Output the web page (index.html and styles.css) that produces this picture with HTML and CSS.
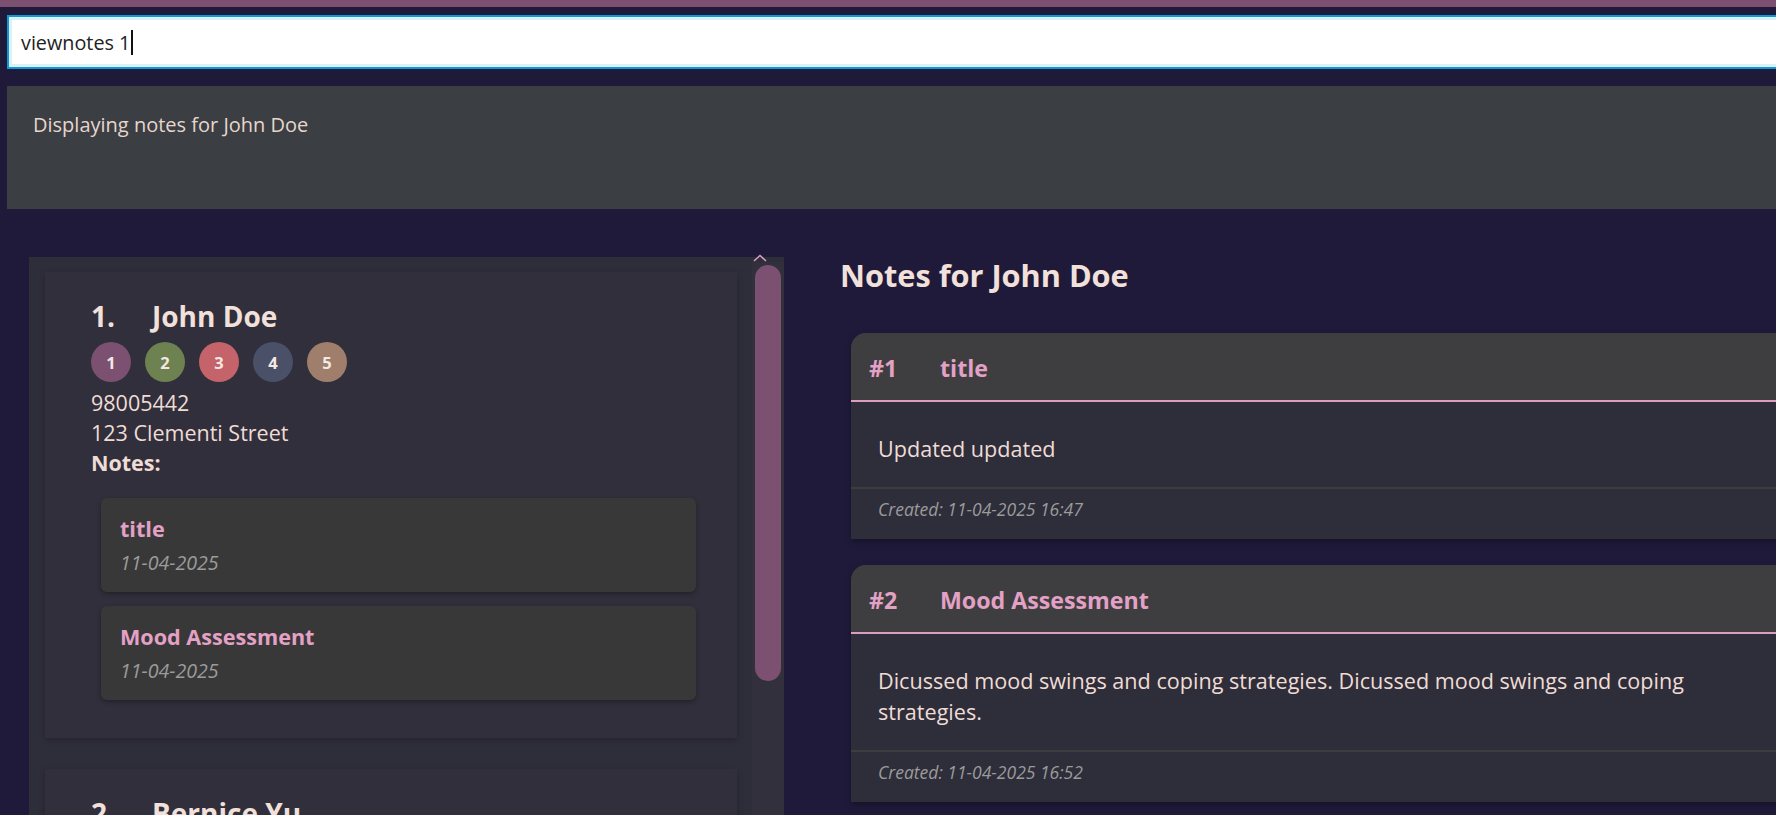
FILE: index.html
```html
<!DOCTYPE html>
<html lang="en">
<head>
<meta charset="utf-8">
<title>Notes</title>
<link rel="stylesheet" href="styles.css">
</head>
<body>
<div class="topbar"></div>
<div class="app">
  <div class="command"><span class="cmd-text">viewnotes 1</span><span class="caret"></span></div>
  <div class="result">Displaying notes for John Doe</div>
  <div class="main">
    <div class="person-panel">
      <div class="person-list">
        <div class="person-card">
          <div class="person-name"><span class="idx">1.</span><span>John Doe</span></div>
          <div class="chips">
            <span class="chip c1">1</span>
            <span class="chip c2">2</span>
            <span class="chip c3">3</span>
            <span class="chip c4">4</span>
            <span class="chip c5">5</span>
          </div>
          <div class="line">98005442</div>
          <div class="line">123 Clementi Street</div>
          <div class="line bold">Notes:</div>
          <div class="mini-notes">
            <div class="mini-note">
              <div class="mini-title">title</div>
              <div class="mini-date">11-04-2025</div>
            </div>
            <div class="mini-note">
              <div class="mini-title">Mood Assessment</div>
              <div class="mini-date">11-04-2025</div>
            </div>
          </div>
        </div>
        <div class="person-card">
          <div class="person-name"><span class="idx">2.</span><span>Bernice Yu</span></div>
        </div>
      </div>
      <div class="scrollbar">
        <svg class="scroll-arrow" width="14" height="8" viewBox="0 0 14 8"><polyline points="1,7 7,1.5 13,7" fill="none" stroke="#d79ac0" stroke-width="1.6"/></svg>
        <div class="thumb"></div>
      </div>
    </div>
    <div class="notes-panel">
      <h1 class="notes-title">Notes for John Doe</h1>
      <div class="note">
        <div class="note-head"><span class="note-num">#1</span><span>title</span></div>
        <div class="note-body">Updated updated</div>
        <div class="note-foot">Created: 11-04-2025 16:47</div>
      </div>
      <div class="note">
        <div class="note-head"><span class="note-num">#2</span><span>Mood Assessment</span></div>
        <div class="note-body">Dicussed mood swings and coping strategies. Dicussed mood swings and coping strategies.</div>
        <div class="note-foot">Created: 11-04-2025 16:52</div>
      </div>
    </div>
  </div>
</div>
</body>
</html>
```
FILE: styles.css
```css
html, body {
  margin: 0;
  padding: 0;
  height: 100%;
  overflow: hidden;
}
body {
  background: #1f1a3a;
  font-family: "Open Sans", "Noto Sans", sans-serif;
  color: #efdcd5;
}
.topbar {
  height: 7px;
  background: #7b5070;
}
.app {
  padding-left: 7px;
  width: 1800px;
}
.command {
  box-sizing: border-box;
  margin-top: 8px;
  height: 54px;
  background: #ffffff;
  border: 2px solid #0b9ad6;
  box-shadow: inset 0 0 0 3px #dcf0f8;
  display: flex;
  align-items: center;
  padding-left: 12px;
  font-size: 19.8px;
  color: #222;
}
.caret {
  display: inline-block;
  width: 1.5px;
  height: 25px;
  background: #111;
  margin-left: 1px;
}
.result {
  box-sizing: border-box;
  margin-top: 17px;
  height: 123px;
  background: #3b3e42;
  padding: 25px 0 0 26px;
  font-size: 20px;
  line-height: 28px;
  color: #e6d6cc;
}
.main {
  display: flex;
  align-items: flex-start;
}
.person-panel {
  margin: 48px 0 0 22px;
  width: 755px;
  height: 560px;
  display: flex;
  background: #2e2d3a;
}
.person-list {
  flex: 1;
  padding: 15px 15px 0 16px;
  display: flex;
  flex-direction: column;
  gap: 31px;
}
.person-card {
  background: #302f3b;
  box-shadow: 0 2px 6px rgba(0, 0, 0, 0.22);
  padding: 25px 41px 38px 46px;
}
.person-name {
  font-weight: 700;
  font-size: 28px;
  line-height: 38px;
  color: #f2e0da;
}
.idx {
  display: inline-block;
  width: 61px;
}
.chips {
  display: flex;
  gap: 14px;
  margin-top: 7px;
}
.chip {
  width: 40px;
  height: 40px;
  border-radius: 50%;
  display: flex;
  align-items: center;
  justify-content: center;
  font-weight: 700;
  font-size: 16.5px;
  color: #f3e8e2;
}
.c1 { background: #7b5070; }
.c2 { background: #6e8150; }
.c3 { background: #c4636a; }
.c4 { background: #4a5068; }
.c5 { background: #a07e6c; }
.line {
  font-size: 21.5px;
  line-height: 30px;
}
.chips + .line { margin-top: 6px; }
.bold { font-weight: 700; }
.mini-notes {
  margin-top: 20px;
  padding-left: 10px;
  display: flex;
  flex-direction: column;
  gap: 14px;
}
.mini-note {
  background: #383838;
  border-radius: 6px;
  box-shadow: 0 2px 5px rgba(0, 0, 0, 0.3);
  padding: 17px 19px 16px;
}
.mini-title {
  font-weight: 700;
  font-size: 21.6px;
  line-height: 28px;
  color: #e3a1c6;
}
.mini-date {
  margin-top: 7px;
  font-style: italic;
  font-size: 19.6px;
  line-height: 26px;
  color: #9b9b9b;
}
.scrollbar {
  position: relative;
  width: 32px;
  margin-top: 5px;
  background: #31303c;
  align-self: stretch;
}
.scroll-arrow {
  position: absolute;
  top: -8px;
  left: 1px;
}
.thumb {
  margin: 3px 3px 0;
  height: 416px;
  border-radius: 13px;
  background: #7b5070;
}
.notes-panel {
  margin-left: 56px;
  width: 960px;
}
.notes-title {
  margin: 46px 0 38px;
  font-size: 30.7px;
  line-height: 40px;
  font-weight: 700;
  color: #f2e0da;
}
.note {
  margin-left: 11px;
  width: 936px;
  margin-bottom: 26px;
  border-top-left-radius: 15px;
  overflow: hidden;
  background: #2e2d3a;
  box-shadow: 0 3px 6px rgba(0, 0, 0, 0.3);
}
.note-head {
  background: #3e3e40;
  border-bottom: 2px solid #dd9dc2;
  padding: 20px 18px 17px;
  font-weight: 700;
  font-size: 23.2px;
  line-height: 30px;
  color: #e3a1c6;
}
.note-num {
  display: inline-block;
  width: 71px;
}
.note-body {
  padding: 31px 27px 23px;
  font-size: 21.6px;
  line-height: 31px;
  color: #efdcd5;
  border-bottom: 2px solid #3d3d41;
}
.note-foot {
  padding: 8px 27px 18px;
  font-style: italic;
  font-size: 17.5px;
  line-height: 24px;
  color: #9b9b9b;
}
```
